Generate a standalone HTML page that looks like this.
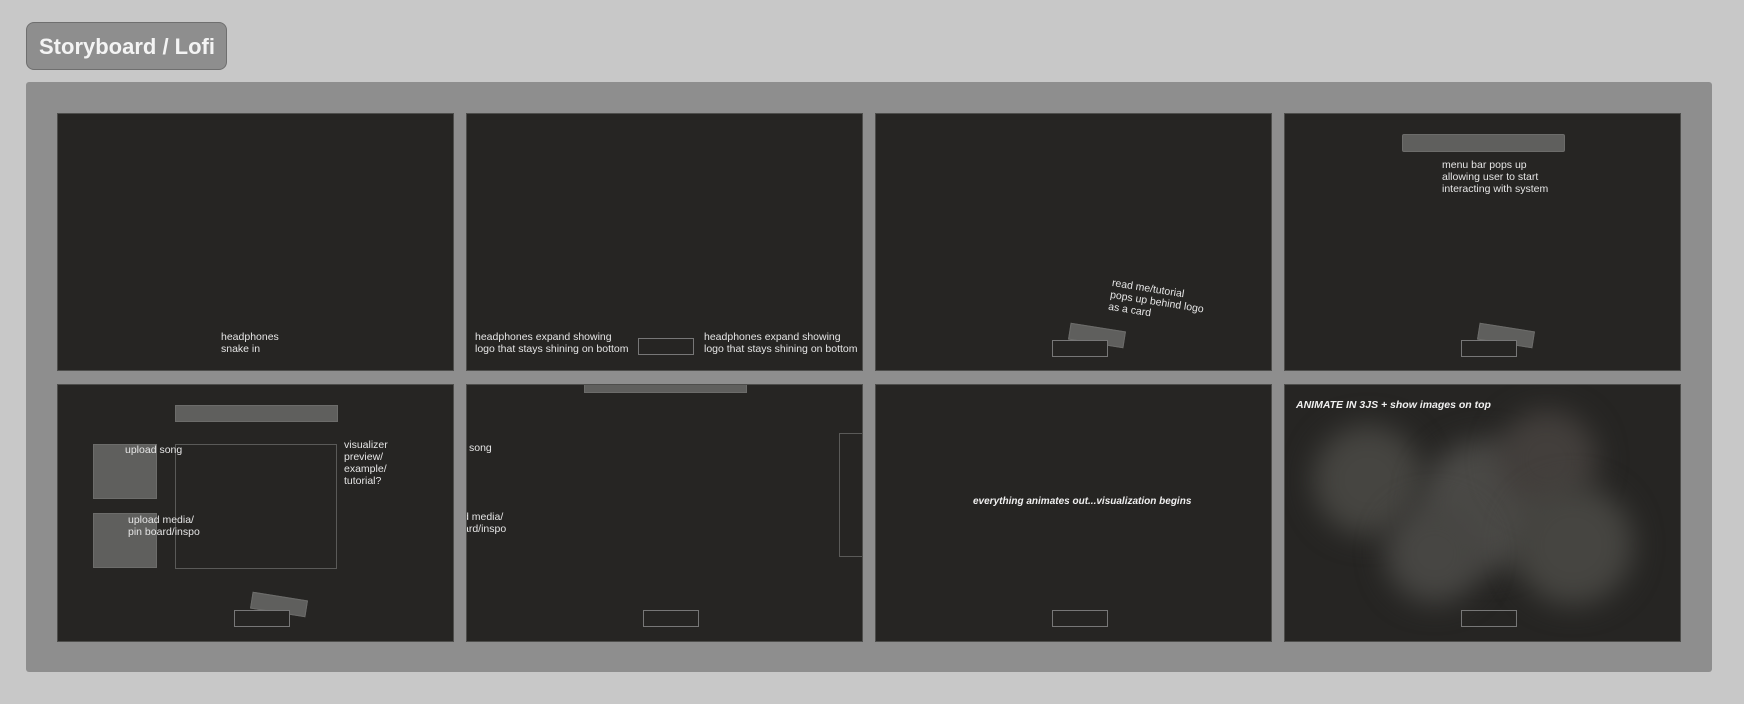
<!DOCTYPE html>
<html><head><style>
*{margin:0;padding:0;box-sizing:border-box}
body{width:1744px;height:704px;background:#c8c8c8;position:relative;overflow:hidden;font-family:"Liberation Sans",sans-serif}
.a{position:absolute}
.title{left:26px;top:22px;width:201px;height:48px;background:#8e8e8e;border:1px solid #6f6f6f;border-radius:8px;color:#f4f4f4;font-size:22px;font-weight:bold;padding:11px 0 0 12px;white-space:nowrap}
.frame{left:26px;top:82px;width:1686px;height:590px;background:#8e8e8e;border-radius:3px}
.p{position:absolute;width:397px;height:258px;background:#262523;border:1px solid #4e4e4c;overflow:hidden}
.t{position:absolute;color:#e6e6e6;font-size:10.5px;line-height:12px;white-space:nowrap}
.bi{font-weight:bold;font-style:italic;color:#f0f0f0}
.g{position:absolute;background:#5f5f5d;border:1px solid #6c6c6a}
.o{position:absolute;border:1px solid #777}
.blob{position:absolute;border-radius:50%;background:#464541;filter:blur(14px)}
</style></head><body>
<div class="a title">Storyboard / Lofi</div>
<div class="a frame"></div>

<div class="p" style="left:57px;top:113px">
  <div class="t" style="left:163px;top:217px">headphones<br>snake in</div>
</div>
<div class="p" style="left:466px;top:113px">
  <div class="t" style="left:8px;top:217px">headphones expand showing<br>logo that stays shining on bottom</div>
  <div class="o" style="left:171px;top:224px;width:56px;height:17px"></div>
  <div class="t" style="left:237px;top:217px">headphones expand showing<br>logo that stays shining on bottom</div>
</div>
<div class="p" style="left:875px;top:113px">
  <div class="t" style="left:237px;top:163px;transform:rotate(9deg);transform-origin:0 0">read me/tutorial<br>pops up behind logo<br>as a card</div>
  <div class="g" style="left:193px;top:213px;width:56px;height:17px;transform:rotate(9deg)"></div>
  <div class="o" style="left:176px;top:226px;width:56px;height:17px;background:#262523"></div>
</div>
<div class="p" style="left:1284px;top:113px">
  <div class="g" style="left:117px;top:20px;width:163px;height:18px;border-radius:2px"></div>
  <div class="t" style="left:157px;top:45px">menu bar pops up<br>allowing user to start<br>interacting with system</div>
  <div class="g" style="left:193px;top:213px;width:56px;height:17px;transform:rotate(9deg)"></div>
  <div class="o" style="left:176px;top:226px;width:56px;height:17px;background:#262523"></div>
</div>

<div class="p" style="left:57px;top:384px">
  <div class="g" style="left:117px;top:20px;width:163px;height:17px"></div>
  <div class="g" style="left:35px;top:59px;width:64px;height:55px"></div>
  <div class="g" style="left:35px;top:128px;width:64px;height:55px"></div>
  <div class="o" style="left:117px;top:59px;width:162px;height:125px;border-color:#5a5a58"></div>
  <div class="t" style="left:67px;top:59px">upload song</div>
  <div class="t" style="left:70px;top:129px">upload media/<br>pin board/inspo</div>
  <div class="t" style="left:286px;top:54px">visualizer<br>preview/<br>example/<br>tutorial?</div>
  <div class="g" style="left:193px;top:211px;width:56px;height:17px;transform:rotate(9deg)"></div>
  <div class="o" style="left:176px;top:225px;width:56px;height:17px;background:#262523"></div>
</div>
<div class="p" style="left:466px;top:384px">
  <div class="g" style="left:117px;top:-2px;width:163px;height:10px"></div>
  <div class="t" style="left:2px;top:57px">song</div>
  <div class="t" style="left:-4px;top:126px">d media/<br>ard/inspo</div>
  <div class="o" style="left:372px;top:48px;width:40px;height:124px;border-color:#5a5a58"></div>
  <div class="o" style="left:176px;top:225px;width:56px;height:17px"></div>
</div>
<div class="p" style="left:875px;top:384px">
  <div class="t bi" style="left:97px;top:111px;font-size:10px">everything animates out...visualization begins</div>
  <div class="o" style="left:176px;top:225px;width:56px;height:17px"></div>
</div>
<div class="p" style="left:1284px;top:384px">
  <div class="blob" style="left:28px;top:40px;width:110px;height:110px"></div>
  <div class="blob" style="left:135px;top:55px;width:130px;height:130px;background:#4a4946"></div>
  <div class="blob" style="left:212px;top:25px;width:100px;height:100px;background:#433f3c"></div>
  <div class="blob" style="left:228px;top:100px;width:120px;height:120px"></div>
  <div class="blob" style="left:100px;top:118px;width:100px;height:100px;background:#474643"></div>
  <div class="t bi" style="left:11px;top:14px;font-size:10.5px">ANIMATE IN 3JS + show images on top</div>
  <div class="o" style="left:176px;top:225px;width:56px;height:17px"></div>
</div>
</body></html>
